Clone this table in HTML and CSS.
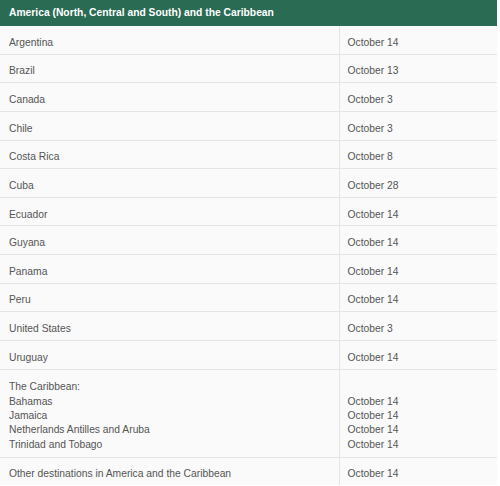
FILE: index.html
```html
<!DOCTYPE html>
<html>
<head>
<meta charset="utf-8">
<link rel="stylesheet" href="styles.css">
</head>
<body>
<table class="dates">
  <colgroup><col class="c1"><col class="c2"></colgroup>
  <thead>
    <tr><th colspan="2">America (North, Central and South) and the Caribbean</th></tr>
  </thead>
  <tbody>
    <tr><td>Argentina</td><td>October 14</td></tr>
    <tr><td>Brazil</td><td>October 13</td></tr>
    <tr><td>Canada</td><td>October 3</td></tr>
    <tr><td>Chile</td><td>October 3</td></tr>
    <tr><td>Costa Rica</td><td>October 8</td></tr>
    <tr><td>Cuba</td><td>October 28</td></tr>
    <tr><td>Ecuador</td><td>October 14</td></tr>
    <tr><td>Guyana</td><td>October 14</td></tr>
    <tr><td>Panama</td><td>October 14</td></tr>
    <tr><td>Peru</td><td>October 14</td></tr>
    <tr><td>United States</td><td>October 3</td></tr>
    <tr><td>Uruguay</td><td>October 14</td></tr>
    <tr class="multi"><td>The Caribbean:<br>Bahamas<br>Jamaica<br>Netherlands Antilles and Aruba<br>Trinidad and Tobago</td><td><br>October 14<br>October 14<br>October 14<br>October 14</td></tr>
    <tr><td>Other destinations in America and the Caribbean</td><td>October 14</td></tr>
  </tbody>
</table>
</body>
</html>
```
FILE: styles.css
```css
html, body {
  margin: 0;
  padding: 0;
  background: #ffffff;
}
body {
  font-family: "Liberation Sans", Arial, sans-serif;
  font-size: 10.3px;
  color: #555555;
}
.dates {
  width: 497px;
  border-collapse: collapse;
  table-layout: fixed;
  background: #fafafa;
}
.c1 { width: 339px; }
.c2 { width: 158px; }
.dates th {
  background: #2a6b53;
  color: #ffffff;
  font-weight: bold;
  text-align: left;
  height: 26px;
  padding: 0 9px;
  line-height: 14px;
  box-sizing: border-box;
}
.dates td {
  padding: 9.67px 8px 3.67px 9px;
  line-height: 14.33px;
  vertical-align: top;
  border-top: 1px solid #e4e4e4;
}
.dates td:first-child {
  border-right: 1px solid #e4e4e4;
}
.dates td + td {
  padding-left: 8px;
}
.dates .multi td {
  padding-top: 10.67px;
  padding-bottom: 4.67px;
}
.dates tbody tr:first-child td {
  border-top: none;
}
```
